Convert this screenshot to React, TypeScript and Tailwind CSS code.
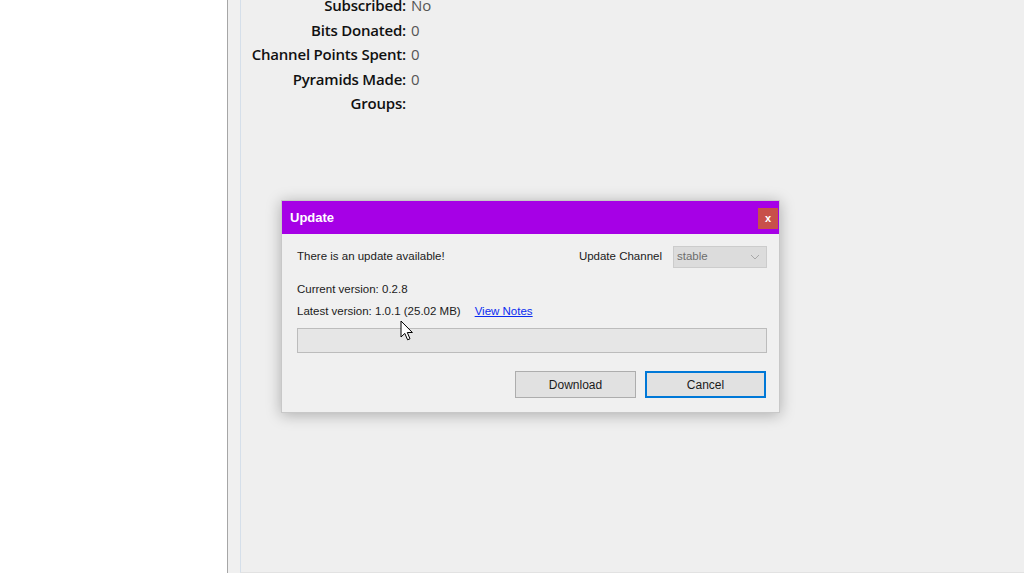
import React from "react";

const rows: [string, string][] = [
  ["Subscribed:", "No"],
  ["Bits Donated:", "0"],
  ["Channel Points Spent:", "0"],
  ["Pyramids Made:", "0"],
  ["Groups:", ""],
];

function Cursor() {
  return (
    <svg width="14" height="22" viewBox="0 0 14 22" className="absolute left-[400px] top-[320px]">
      <path
        d="M1 1 L1 17 L4.8 13.4 L7.6 19.8 L10 18.8 L7.3 12.5 L12.4 12.5 Z"
        fill="#ffffff"
        stroke="#000000"
        strokeWidth="1"
        strokeLinejoin="miter"
      />
    </svg>
  );
}

export default function App() {
  return (
    <div
      className="relative w-[1024px] h-[576px] overflow-hidden bg-white flex"
      style={{ fontFamily: '"Liberation Sans", Arial, sans-serif' }}
    >
      <div className="w-[227px] h-full bg-white" />
      <div className="w-[13px] h-[573px] bg-[#f0f0f0] border-l border-l-[#a6a6a6]" />
      <div className="flex-1 h-[573px] bg-[#efefef] border-l border-l-[#d5dfea] border-b border-b-[#e2e2e2]">
        <div
          className="grid grid-cols-[165px_auto] gap-x-[5px] mt-[-7px] text-[15px]"
          style={{ fontFamily: '"Open Sans", sans-serif' }}
        >
          {rows.map(([k, v]) => (
            <React.Fragment key={k}>
              <div className="text-right font-semibold text-[#111] leading-[24.6px] h-[24.6px] tracking-[-0.2px]">{k}</div>
              <div className="text-[#555] leading-[24.6px] h-[24.6px]">{v}</div>
            </React.Fragment>
          ))}
        </div>
      </div>

      {/* Dialog window */}
      <div className="absolute left-[281px] top-[200px] w-[499px] h-[213px] bg-[#f0f0f0] border border-[#c8c8c8] shadow-[0_2px_14px_rgba(0,0,0,0.28)] flex flex-col">
        <div className="h-[33px] bg-[#a600e6] flex items-center justify-between pl-[8px] pr-[1px]">
          <span className="text-white font-bold text-[13px]">Update</span>
          <div className="w-[20px] h-[21px] bg-[#c8504a] flex items-center justify-center mt-[2px]">
            <span className="text-white text-[11px] font-bold leading-none">x</span>
          </div>
        </div>
        <div className="flex-1 pl-[15px] pr-[12px] pt-[12px] text-[11.5px] text-[#1b1b1b]">
          <div className="flex items-center justify-between h-[22px]">
            <span>There is an update available!</span>
            <div className="flex items-center gap-[11px]">
              <span>Update Channel</span>
              <div className="w-[94px] h-[22px] bg-[#dcdcdc] border border-[#cccccc] flex items-center justify-between pl-[3px] pr-[6px]">
                <span className="text-[#6d6d6d]">stable</span>
                <svg width="10" height="6" viewBox="0 0 10 6">
                  <path d="M1 1 L5 5 L9 1" fill="none" stroke="#a8a8a8" strokeWidth="1" />
                </svg>
              </div>
            </div>
          </div>
          <div className="mt-[10px] leading-[22px]">Current version: 0.2.8</div>
          <div className="flex items-center leading-[22px]">
            <span>Latest version: 1.0.1 (25.02 MB)</span>
            <span className="ml-[14px] text-[#0a2cf0] underline">View Notes</span>
          </div>
          <div className="mt-[6px] h-[25px] w-full bg-[#e6e6e6] border border-[#bcbcbc]" />
          <div className="flex justify-end gap-[9px] mt-[18px] pr-[1px] text-[12px]">
            <div className="w-[121px] h-[27px] bg-[#e1e1e1] border border-[#adadad] flex items-center justify-center">Download</div>
            <div className="w-[121px] h-[27px] bg-[#e1e1e1] border-2 border-[#0078d7] flex items-center justify-center">Cancel</div>
          </div>
        </div>
      </div>

      <Cursor />
    </div>
  );
}
